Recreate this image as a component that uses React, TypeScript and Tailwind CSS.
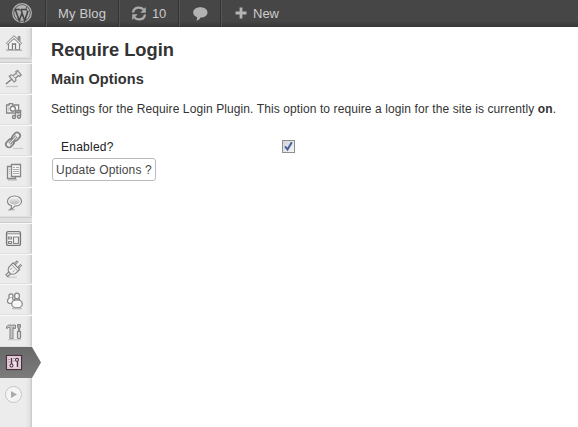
import React from "react";

type IconProps = { h: number; children: React.ReactNode };

function Glyph({ h, children }: IconProps) {
  return (
    <svg width="32" height={h} viewBox={`0 0 32 ${h}`} fill="none" stroke="#858585" strokeWidth="1.2" className="block">
      {children}
    </svg>
  );
}

function Item({ h, children }: IconProps) {
  return (
    <div className="w-8 shrink-0 border-t border-t-[#f9f9f9] border-b border-b-[#dfdfdf]" style={{ height: h }}>
      <div className="-mt-px">
        <Glyph h={h}>{children}</Glyph>
      </div>
    </div>
  );
}

function Separator() {
  return <div className="h-[5px] w-8 shrink-0 border-y border-[#cccccc] bg-[#dfdfdf]" />;
}

function Sidebar() {
  return (
    <nav className="flex h-[400px] w-8 shrink-0 flex-col bg-[linear-gradient(to_right,#ececec_0,#ececec_25px,#e2e2e2_30px,#cccccc_31px,#cccccc_32px)]">
      <Item h={31}>
        <path d="M18 9.500h2v5h-2z" fill="#999" strokeWidth=".8" />
        <path d="M8.500 16v6.500h11V16L14 11z" fill="#f4f4f4" />
        <path d="M6.300 16.300 14 8.700l7.700 7.600-1.400 1.200L14 11.600l-6.300 5.900z" fill="#e8e8e8" strokeWidth="1" />
        <path d="M12.500 22.500V17h3v5.500" fill="#fff" stroke="#777" strokeWidth="1.300" />
        <path d="M6 23.200h16" stroke="#aaa" />
      </Item>
      <Separator />
      <Item h={31}>
        <path d="M6 23.500h12" stroke="#c4c4c4" />
        <g transform="translate(1 -.8) rotate(50 13 15)">
          <path d="M13 18v7.500" stroke="#777" strokeWidth="1.300" />
          <path d="M10 8h6v2.300h-1.300v4l2.100 1.400v2.300H9.200v-2.300l2.100-1.400v-4H10z" fill="#e6e6e6" stroke="#828282" strokeWidth="1.100" />
          <path d="M11.500 11h3M11.500 14.800h3" stroke="#a5a5a5" strokeWidth=".9" />
        </g>
      </Item>
      <Item h={31}>
        <path d="M6.600 11h2.600V9.600h3.300V11h6.100v8H6.600z" fill="#f8f8f8" strokeWidth="1.300" />
        <path d="M8.400 12.500v5" stroke="#ccc" />
        <circle cx="12.800" cy="14.800" r="2.500" fill="#fff" strokeWidth="1.500" />
        <path d="M16 22.500v-5.500h4.500V22" stroke="#ececec" strokeWidth="2.600" />
        <path d="M15.500 23v-6.500h5V22M15.500 18.300h5" strokeWidth="1.500" />
        <circle cx="14" cy="23" r="1.500" fill="#eee" strokeWidth="1.400" />
        <circle cx="19" cy="22.800" r="1.500" fill="#eee" strokeWidth="1.400" />
      </Item>
      <Item h={31}>
        <path d="M13 23.500h10" stroke="#ccc" />
        <g transform="rotate(-47 13 15)">
          <rect x="4" y="11.900" width="9" height="6.200" rx="3.100" strokeWidth="1.700" />
          <rect x="13" y="11.900" width="9" height="6.200" rx="3.100" strokeWidth="1.700" />
          <path d="M8 15h10" stroke="#777" strokeWidth="3" />
          <path d="M8 15h10" stroke="#eee" strokeWidth="1.200" />
        </g>
      </Item>
      <Item h={31}>
        <path d="M8 24h9" stroke="#bbb" />
        <path d="M7.500 10.500h8v12h-8z" fill="#eee" strokeWidth="1.300" />
        <path d="M11.500 8.500h9v12h-9z" fill="#f7f7f7" strokeWidth="1.300" />
        <path d="M13 11.500h2m1 0h3M13 13.500h6M13 15.500h6M13 17.500h6M9 13.500h1M9 15.500h1M9 17.500h1" stroke="#aaa" strokeWidth="1" />
      </Item>
      <Item h={30}>
        <defs>
          <linearGradient id="speech" x1="0" y1="0" x2="0" y2="1">
            <stop stopColor="#f0f0f0" />
            <stop offset="1" stopColor="#b5b5b5" />
          </linearGradient>
        </defs>
        <path d="M8 22.800h7" stroke="#bbb" />
        <path d="M10.500 22.500c1-1.200 1.300-2.400 1-4-2.500-.6-4-2.200-4-4.300 0-3 3-5.200 7-5.200s7 2.200 7 5.200c0 2.800-2.800 4.800-6.700 4.800-1 1.600-2.300 2.800-4.300 3.500z" fill="#f8f8f8" />
        <ellipse cx="14.500" cy="14" rx="5.300" ry="3.600" fill="url(#speech)" stroke="none" />
      </Item>
      <div className="h-1.5 w-8 shrink-0 border-y border-[#cccccc] bg-[#dfdfdf]" />
      <Item h={31}>
        <rect x="6.600" y="8.600" width="13.800" height="13.800" rx="1.500" fill="#fafafa" stroke="#777" strokeWidth="1.400" />
        <path d="M7 10.700h13" stroke="#aaa" strokeWidth="1.500" />
        <path d="M8.500 14h3v2h-3zM8.500 18.500h3v2h-3zM13.500 14h5v6.500h-5z" fill="#eee" strokeWidth="1.200" />
      </Item>
      <Item h={30}>
        <path d="M8 23.300h9" stroke="#ccc" />
        <g transform="translate(0 .2) rotate(45 13 15)">
          <path d="M12 19h2.500v5H12z" fill="#e5e5e5" strokeWidth="1.100" />
          <path d="M10 6.500h1.400v5H10zM15 6.500h1.400v5H15z" fill="#f4f4f4" strokeWidth="1" />
          <path d="M8.600 10.500h9.200V15c0 3-2 5-4.600 5s-4.600-2-4.600-5z" fill="#f4f4f4" strokeWidth="1.300" />
          <path d="M9 12.800h8.500M11.500 14.500v3M14.800 14.500v3" stroke="#aaa" strokeWidth="1" />
        </g>
      </Item>
      <Item h={31}>
        <circle cx="11" cy="12" r="2.100" fill="#f7f7f7" />
        <path d="M9.500 13.700c-1.400.8-2 2-2 3.200 0 2 1.600 2.600 4 2.600l2-3-1.200-2.800" fill="#f7f7f7" />
        <ellipse cx="17" cy="12" rx="2.400" ry="2.800" fill="#f7f7f7" />
        <ellipse cx="17" cy="19.900" rx="5.300" ry="4" fill="#f7f7f7" />
        <path d="M15.200 14.300c-.6.600-.8 1.200-.9 2M18.800 14.300c.6.600.8 1.200.9 2" />
        <path d="M12 24.700h10" stroke="#bbb" />
      </Item>
      <Item h={32}>
        <path d="M6.500 13.500v-1.700c1-1.600 2.500-2 5-1.700h4v3.400h-2v-1H13V24h-3V12.500H8.500z" fill="#c6c6c6" strokeWidth="1" />
        <path d="M17.600 9.500h2.800v2.700l-.8.800v3h-1.200v-3l-.8-.8z" fill="#aaa" strokeWidth="1" />
        <path d="M17.500 16.500h3V23l-1.500.8-1.500-.8z" fill="#ddd" />
        <path d="M8 24.700h13" stroke="#ccc" />
      </Item>
      <div className="flex h-[31px] w-[41px] shrink-0 bg-[linear-gradient(to_bottom,#696969,#7b7b7b)] [clip-path:polygon(0_0,32px_0,41px_50%,32px_100%,0_100%)]">
        <Glyph h={31}>
          <rect x="6.500" y="8.500" width="15" height="14" fill="#f5edf3" stroke="#4c3040" strokeWidth="1.200" />
          <rect x="8" y="10" width="12" height="11" fill="#eee1ea" stroke="#c4a6ba" strokeWidth=".6" />
          <path d="M11.500 11v6M17.500 14v6" stroke="#543348" strokeWidth="1.500" />
          <circle cx="11.500" cy="18.500" r="1.500" fill="#fff" stroke="#543348" />
          <circle cx="17" cy="12.800" r="1.500" fill="#fff" stroke="#543348" />
          <path d="M14 11v1m0 1.500v1M9.200 12v1m0 1.500v1" stroke="#8d637e" />
        </Glyph>
      </div>
      <div className="h-[49px]">
        <Glyph h={49}>
          <circle cx="13.500" cy="16.500" r="8" fill="#f4f4f4" stroke="#c6c6c6" strokeWidth="1" />
          <path d="m11 13 6 3.500-6 3.500z" fill="#aaa" stroke="none" />
        </Glyph>
      </div>
    </nav>
  );
}

function AdminBar() {
  return (
    <header className="flex h-[27px] bg-[linear-gradient(to_bottom,#464646_0,#464646_21px,#373737_27px)] text-[13px] text-[#cccccc]">
      <div className="flex w-[46px] items-center border-r border-[#333333] pl-3">
        <svg width="21" height="21" viewBox="0 0 21 21" className="block">
          <circle cx="10" cy="10" r="9.300" fill="none" stroke="#b2b2b2" strokeWidth="1.300" />
          <circle cx="10" cy="10" r="7.900" fill="#b2b2b2" />
          <path d="m3.200 6.500 4.100 11L10 10l2.700 7.500L16 8M2.500 6.500H8M8.700 6.500h5.500M8.800 6.500 10.200 10" fill="none" stroke="#444" strokeWidth="1.600" />
          <path d="M14.500 4.200c-1.200 2.200 1.500 3.200.8 5.600" fill="none" stroke="#444" strokeWidth="1" />
        </svg>
      </div>
      <div className="flex w-[73px] items-center border-r border-[#333333] border-l border-l-[#555555] pl-[11px]">
        <span className="tracking-[.15px]">My Blog</span>
      </div>
      <div className="flex w-[60px] items-center border-r border-[#333333] border-l border-l-[#555555] pl-[11px]">
        <svg width="16" height="15" viewBox="0 0 16 15" className="mr-[5px] block" fill="none" stroke="#aaa" strokeWidth="2.300">
          <path d="M2 6.500C2.500 3 5.300 1.600 8 1.600c2 0 3.500.8 4.500 2M14 8.500c-.5 3.500-3.300 4.900-6 4.900-2 0-3.500-.8-4.500-2" />
          <path d="M14.800 1v5.700H9.300zM1.200 14V8.300h5.500z" fill="#aaa" stroke="none" />
        </svg>
        <span className="tracking-[-.3px]">10</span>
      </div>
      <div className="flex w-[42px] items-center border-r border-[#333333] border-l border-l-[#555555] pl-[13px]">
        <svg width="15" height="14" viewBox="0 0 15 14" className="block">
          <path d="M7.300.3C11.500.3 14.500 2.500 14.500 5.500s-3 5-7 5c-.5 1.500-2 2.700-4.200 3.300.8-1 1-2.300.5-3.800C1.500 9.200.2 7.500.2 5.500c0-3 3-5.200 7.100-5.200z" fill="#b2b2b2" />
        </svg>
      </div>
      <div className="flex flex-1 items-center border-l border-[#555555] pl-[13px]">
        <svg width="12" height="12" viewBox="0 0 12 12" className="mr-1.5 -mt-0.5 block">
          <path d="M6 .5v11M.5 6h11" stroke="#b5b5b5" strokeWidth="2.800" />
        </svg>
        New
      </div>
    </header>
  );
}

export default function App() {
  return (
    <div className="h-[427px] w-[578px] overflow-hidden bg-white font-['Liberation_Sans',Arial,sans-serif] text-[#333333]">
      <AdminBar />
      <div className="flex">
        <Sidebar />
        <main className="pl-[19px] pt-[11px]">
          <h1 className="text-[18.300px] leading-6 font-bold">Require Login</h1>
          <h2 className="mt-2 text-[14.500px] leading-[18px] font-bold tracking-[.08px]">Main Options</h2>
          <p className="mt-[13px] text-[12px] leading-4 tracking-[.098px] whitespace-nowrap">
            Settings for the Require Login Plugin. This option to require a login for the site is currently <b>on</b>.
          </p>
          <div className="mt-[22px] flex h-4 items-center pl-2.5 text-[12px] text-[#222222]">
            <label htmlFor="enabled" className="w-[221px] tracking-[.25px]">Enabled?</label>
            <span id="enabled" className="mb-0.5 flex size-[13px] items-center justify-center border border-[#8e8f8f] bg-[linear-gradient(135deg,#cfd5dc,#f6f6f6)]">
              <svg width="11" height="11" viewBox="0 0 11 11" fill="none" stroke="#4a5f97" strokeWidth="2">
                <path d="M2 5.300 4.500 8.500 8.800 1.300" />
              </svg>
            </span>
          </div>
          <button className="mt-[3px] ml-px flex h-[23px] w-[104px] items-center justify-center rounded-[3px] border border-[#bbbbbb] text-[12px] tracking-[.15px] whitespace-nowrap text-[#464646]">
            Update Options ?
          </button>
        </main>
      </div>
    </div>
  );
}
